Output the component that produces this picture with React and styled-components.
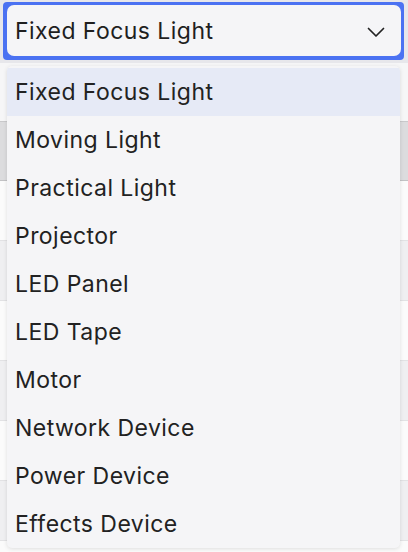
import styled, { createGlobalStyle } from 'styled-components';

const options = [
  'Fixed Focus Light',
  'Moving Light',
  'Practical Light',
  'Projector',
  'LED Panel',
  'LED Tape',
  'Motor',
  'Network Device',
  'Power Device',
  'Effects Device',
];

const rows = ['white', 'grey', 'white', 'grey', 'white', 'grey', 'white'];

const App = () => {
  return (
    <Page>
      <GlobalStyle />
      <Toolbar>
        <Ring>
          <Trigger>
            <span>Fixed Focus Light</span>
            <svg width='20' height='20' viewBox='0 0 20 20' fill='none' stroke='#222' strokeWidth='1.7' strokeLinecap='round' strokeLinejoin='round'>
              <path d='M2.5 6.5l7.5 7.5 7.5-7.5' />
            </svg>
          </Trigger>
        </Ring>
      </Toolbar>
      <Spacer />
      <HeaderRow />
      {rows.map((tone, i) => (
        <Row key={i} tone={tone} />
      ))}
      <Menu>
        {options.map((label, i) => (
          <Item key={label} selected={i === 0}>
            {label}
          </Item>
        ))}
      </Menu>
    </Page>
  );
};

const GlobalStyle = createGlobalStyle`
  body {
    margin: 0;
    background: #f9f9fa;
    font-family: Inter, "Noto Sans", sans-serif;
  }
`;

const Page = styled.div`
  position: relative;
  width: 408px;
  height: 552px;
  overflow: hidden;
  background: #f9f9fa;
`;

const Toolbar = styled.div`
  height: 63px;
  padding: 2px 4px 0 3px;
  box-sizing: border-box;
  background: #e7e7eb;
`;

const Ring = styled.div`
  background: #4b72f2;
  border-radius: 4px;
  padding: 3px 3px 4px 4px;
`;

const Trigger = styled.div`
  display: flex;
  align-items: center;
  justify-content: space-between;
  height: 51px;
  padding: 0 15px 0 8px;
  background: #f5f5f7;
  border-radius: 7px;
  font-size: 23px;
  font-weight: 400;
  letter-spacing: 0.45px;
  color: #1f1f1f;

  svg {
    margin-top: 2px;
  }
`;

const Spacer = styled.div`
  height: 58px;
  background: #f6f6f7;
`;

const HeaderRow = styled.div`
  height: 58px;
  background: #dcdcde;
  border-top: 1px solid #c9c9cb;
  border-bottom: 1px solid #c2c2c4;
`;

const Row = styled.div`
  height: 59px;
  background: ${({ tone }) => (tone === 'grey' ? '#efeff1' : '#fbfbfb')};
  border-bottom: 1px solid #e2e2e4;
`;

const Menu = styled.div`
  position: absolute;
  top: 66px;
  left: 7px;
  width: 393px;
  padding: 2px 0 0;
  background: #f5f5f7;
  border-radius: 5px;
  box-shadow: 0 1px 4px rgba(0, 0, 0, 0.12);
  overflow: hidden;
`;

const Item = styled.div`
  height: 48px;
  display: flex;
  align-items: center;
  padding-left: 8px;
  font-size: 23px;
  letter-spacing: 0.45px;
  color: #222;
  background: ${({ selected }) => (selected ? '#e6eaf6' : 'transparent')};
`;

export default App;
